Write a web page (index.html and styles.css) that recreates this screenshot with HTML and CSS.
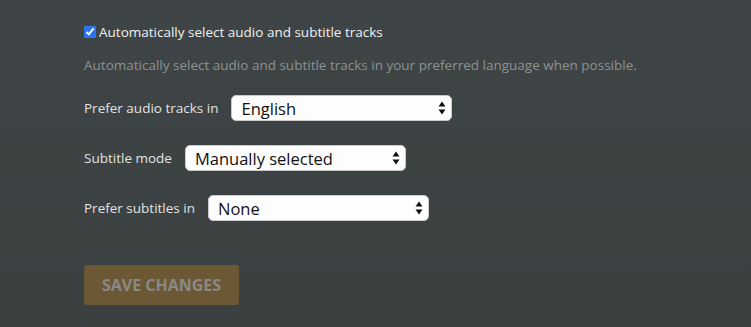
FILE: index.html
```html
<!DOCTYPE html>
<html lang="en">
<head>
<meta charset="utf-8">
<title>Playback settings</title>
<link rel="stylesheet" href="styles.css">
</head>
<body>
<main class="panel">
  <label class="check-row">
    <input type="checkbox" class="check" checked>
    <span>Automatically select audio and subtitle tracks</span>
  </label>
  <p class="hint">Automatically select audio and subtitle tracks in your preferred language when possible.</p>

  <div class="field">
    <label class="field-label" for="audio">Prefer audio tracks in</label>
    <div class="select-wrap">
      <select id="audio" class="select"><option>English</option></select>
      <svg class="arrows" width="8" height="14" viewBox="0 0 8 14"><path d="M4 0.5 L7.5 5.5 L0.5 5.5 Z M4 13.5 L7.5 8.5 L0.5 8.5 Z" fill="#111"/></svg>
    </div>
  </div>

  <div class="field">
    <label class="field-label" for="mode">Subtitle mode</label>
    <div class="select-wrap">
      <select id="mode" class="select"><option>Manually selected</option></select>
      <svg class="arrows" width="8" height="14" viewBox="0 0 8 14"><path d="M4 0.5 L7.5 5.5 L0.5 5.5 Z M4 13.5 L7.5 8.5 L0.5 8.5 Z" fill="#111"/></svg>
    </div>
  </div>

  <div class="field">
    <label class="field-label" for="subs">Prefer subtitles in</label>
    <div class="select-wrap">
      <select id="subs" class="select"><option>None</option></select>
      <svg class="arrows" width="8" height="14" viewBox="0 0 8 14"><path d="M4 0.5 L7.5 5.5 L0.5 5.5 Z M4 13.5 L7.5 8.5 L0.5 8.5 Z" fill="#111"/></svg>
    </div>
  </div>

  <button class="save" type="button" disabled>Save Changes</button>
</main>
</body>
</html>
```
FILE: styles.css
```css
html, body {
  margin: 0;
  height: 100%;
}
body {
  background: linear-gradient(180deg, #3f4546 0%, #3b4141 100%);
  font-family: "Open Sans", "DejaVu Sans", sans-serif;
  overflow: hidden;
}
.panel {
  padding: 23px 0 0 84px;
  display: flex;
  flex-direction: column;
  align-items: flex-start;
}
.check-row {
  display: flex;
  align-items: center;
  gap: 3px;
  height: 18px;
  font-size: 13.5px;
  color: #f0f0f0;
}
.check {
  margin: 0;
  width: 12px;
  height: 12px;
  accent-color: #2a74f0;
}
.hint {
  margin: 15px 0 0;
  line-height: 18px;
  font-size: 13.5px;
  color: #8c9292;
}
.field {
  display: flex;
  align-items: center;
  gap: 13px;
  height: 26px;
  margin-top: 24px;
}
.hint + .field {
  margin-top: 21px;
}
.field-label {
  font-size: 13.5px;
  color: #e2e2e2;
}
.select-wrap {
  position: relative;
  width: 221px;
  height: 26px;
}
.select {
  appearance: none;
  -webkit-appearance: none;
  width: 100%;
  height: 100%;
  margin: 0;
  padding: 0 24px 0 9px;
  border: 1px solid #c9c9c9;
  border-radius: 5px;
  background: #fdfdfd;
  font-family: "Open Sans", "DejaVu Sans", sans-serif;
  font-size: 16.5px;
  color: #111;
}
.arrows {
  position: absolute;
  right: 6px;
  top: 6px;
  pointer-events: none;
}
.save {
  margin-top: 44px;
  width: 155px;
  height: 40px;
  padding: 0;
  border: none;
  border-radius: 3px;
  background: #6d5836;
  color: #878a85;
  font-family: "Open Sans", "DejaVu Sans", sans-serif;
  font-weight: 700;
  font-size: 16px;
  text-transform: uppercase;
}
```
